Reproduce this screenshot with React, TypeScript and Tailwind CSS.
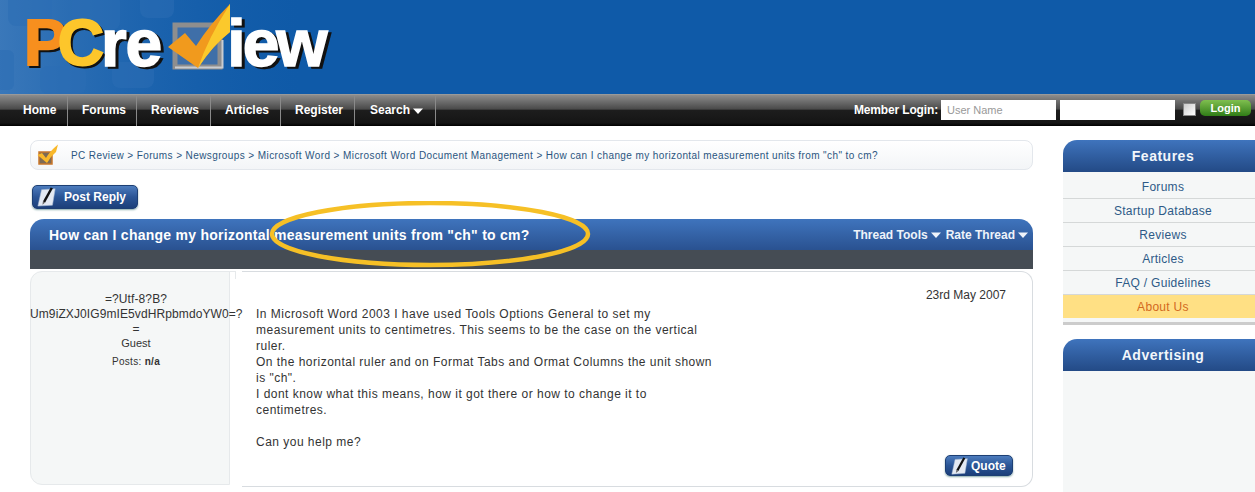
import { ReactNode } from "react";

const navItems = [
  { label: "Home", width: "w-[59px]" },
  { label: "Forums", width: "w-[69px]" },
  { label: "Reviews", width: "w-[74px]" },
  { label: "Articles", width: "w-[70px]" },
  { label: "Register", width: "w-[74px]" },
];
const sideLinks = ["Forums", "Startup Database", "Reviews", "Articles", "FAQ / Guidelines"];
const crumbs = [
  "PC Review",
  "Forums",
  "Newsgroups",
  "Microsoft Word",
  "Microsoft Word Document Management",
  'How can I change my horizontal measurement units from "ch" to cm?',
];

function Caret({ className = "" }: { className?: string }) {
  return (
    <svg width="10" height="6" viewBox="0 0 10 6" className={className}>
      <path d="M0 0.5 H10 L5 6 Z" fill="currentColor" />
    </svg>
  );
}

function NoteIcon({ size = 20 }: { size?: number }) {
  return (
    <svg width={size} height={size} viewBox="0 0 22 22" className="shrink-0">
      <path d="M5 3 L20 2 L17 20 L1 21 Z" fill="#e4eaf3" stroke="#a9bbd4" strokeWidth="0.6" />
      <path d="M15 0.5 L17.5 1.5 L9 17 L6.5 16 Z" fill="#111" />
      <path d="M6.5 16 L9 17 L6 19.5 Z" fill="#666" />
    </svg>
  );
}

function BlueButton({ children, className }: { children: ReactNode; className: string }) {
  return (
    <div
      className={`flex items-center rounded-[5px] border border-[#1d3f74] bg-gradient-to-b from-[#4d7cbd] via-[#2a5596] to-[#1c3f7a] font-bold text-white shadow-[0_1px_2px_#8aa] ${className}`}
    >
      {children}
    </div>
  );
}

function SideHeader({ title }: { title: string }) {
  return (
    <div className="flex h-8 items-center justify-center rounded-tl-[14px] bg-gradient-to-b from-[#3f74bd] to-[#234a86] text-[14px] font-bold tracking-[0.5px] text-[#f2f6fb]">
      {title}
    </div>
  );
}

function Logo() {
  return (
    <div className="relative flex h-[94px] w-[360px] items-start pl-[24px] pt-[6px] font-['Liberation_Sans',sans-serif] text-[66px] font-bold leading-[74px]">
      <span className="text-[64px] tracking-[-9px] [filter:drop-shadow(2px_2px_0_#111)]">
        <span className="text-[#f78f1e] [-webkit-text-stroke:2px_#f78f1e]">P</span>
        <span className="text-[#fdc62b] [-webkit-text-stroke:2px_#fdc62b]">C</span>
      </span>
      <span className="ml-[6px] tracking-[-1px] text-white [-webkit-text-stroke:1.5px_white] [filter:drop-shadow(3px_2px_0_#111)]">
        re
      </span>
      <span className="ml-[66px] tracking-[-3px] text-white [-webkit-text-stroke:1.5px_white] [filter:drop-shadow(3px_2px_0_#111)]">
        iew
      </span>
      <svg width="70" height="72" viewBox="0 0 70 72" className="absolute left-[166px] top-0">
        <rect x="9" y="25" width="45" height="42" fill="#3f6fa8" stroke="#8e8e8e" strokeWidth="5" />
        <path d="M9 67.5 H56.5 V40" fill="none" stroke="#c9ccd0" strokeWidth="2" />
        <path d="M2 47 L19 33 L30 46 Q44 24 64 4 L64 32 Q47 45 32 68 Z" fill="#f19a1d" />
        <path d="M32 68 Q42 38 64 4 L64 32 Q47 45 32 68 Z" fill="#fbc92c" />
      </svg>
    </div>
  );
}

export default function App() {
  return (
    <div className="h-[492px] w-[1255px] overflow-hidden bg-white font-['Liberation_Sans',Arial,sans-serif] text-[12px] text-[#333]">
      <header className="relative h-[94px] overflow-hidden bg-[#0f5aa8]">
        <svg width="300" height="94" viewBox="0 0 300 94" className="absolute left-0 top-0">
          <defs>
            <linearGradient id="kb" x1="0" x2="1">
              <stop offset="0" stopColor="#5d90c8" stopOpacity="0.55" />
              <stop offset="1" stopColor="#1f66b0" stopOpacity="0" />
            </linearGradient>
          </defs>
          <rect width="300" height="94" fill="url(#kb)" />
          <g fill="#2b6db5" fillOpacity="0.55">
            <rect x="8" y="-8" width="44" height="34" rx="8" />
            <rect x="72" y="-6" width="48" height="36" rx="8" />
            <rect x="140" y="-10" width="34" height="28" rx="8" />
            <rect x="-10" y="50" width="24" height="40" rx="6" />
            <rect x="40" y="66" width="46" height="28" rx="8" />
            <rect x="112" y="62" width="42" height="26" rx="8" />
          </g>
        </svg>
        <Logo />
      </header>

      <nav className="flex h-8 items-stretch justify-between border-t border-[#999] bg-[linear-gradient(#8c8c8c,#4a4a4a_45%,#1d1d1d_50%,#151515_90%,#000)] text-white">
        <ul className="flex pl-[9px] font-bold">
          {navItems.map((item) => (
            <li key={item.label} className={`flex items-center border-r border-[#8a8a8a] pb-[2px] pl-[14px] ${item.width}`}>
              {item.label}
            </li>
          ))}
          <li className="flex w-[81px] items-center gap-[3px] border-r border-[#8a8a8a] pb-[2px] pl-[15px]">
            Search <Caret className="mt-[2px]" />
          </li>
        </ul>
        <div className="flex items-center pb-[2px] pr-[4px]">
          <span className="mr-[3px] font-bold tracking-[-0.15px]">Member Login:</span>
          <input
            placeholder="User Name"
            className="h-5 w-[115px] bg-white px-[6px] text-[11px] text-[#333] placeholder:text-[#999]"
          />
          <input className="ml-[4px] h-5 w-[115px] bg-white" />
          <span className="ml-[8px] h-[13px] w-[13px] border border-[#888] bg-gradient-to-br from-[#ccc] to-white" />
          <span className="mb-[3px] ml-[4px] flex h-[16px] w-[51px] items-center justify-center rounded-[5px] bg-gradient-to-b from-[#7fbf4f] to-[#2f7d16] text-[11px] font-bold text-white">
            Login
          </span>
        </div>
      </nav>

      <div className="flex pl-[30px] pt-[14px]">
        <main className="w-[1003px] shrink-0">
          <div className="flex h-[30px] items-center rounded-[8px] border border-[#e3e7ec] bg-gradient-to-b from-white to-[#f3f5f7] pl-[6px] text-[10px] tracking-[0.4px] text-[#2a5580]">
            <svg width="22" height="22" viewBox="0 0 22 22" className="mr-[12px] shrink-0">
              <rect x="2" y="8" width="13" height="12" fill="#7d6a55" stroke="#c9772a" strokeWidth="1.5" />
              <path d="M0.5 11 L5 9 L9 14 Q13 7 21 0.5 L19 8 Q14 12 10 19 Z" fill="#f9b82a" />
            </svg>
            {crumbs.map((c, i) => (
              <span key={c} className="whitespace-pre">
                {c}
                {i < crumbs.length - 1 ? " > " : ""}
              </span>
            ))}
          </div>

          <BlueButton className="ml-[2px] mt-[15px] h-[24px] w-[106px] gap-[7px] pl-[4px]">
            <NoteIcon />
            Post Reply
          </BlueButton>

          <div className="relative mt-[10px] h-[50px] rounded-t-[14px] bg-[linear-gradient(#3f74bd,#2a5291_61%,#454c54_63%,#454c54)] text-white">
            <div className="flex h-[31px] items-center justify-between pl-[19px] pr-[5px]">
              <h1 className="pt-[1px] text-[14px] font-bold tracking-[0.26px]">
                How can I change my horizontal measurement units from "ch" to cm?
              </h1>
              <div className="flex items-center gap-[3px] font-bold text-[#eef3fa]">
                Thread Tools <Caret />
                <span className="ml-[2px]">Rate Thread</span> <Caret />
              </div>
            </div>
            <svg width="324" height="70" viewBox="0 0 324 70" className="absolute left-[238px] top-[-18px]" fill="none">
              <ellipse cx="162" cy="33" rx="158" ry="31" stroke="#f6c026" strokeWidth="4.5" />
            </svg>
          </div>

          <div className="mt-[2px] flex h-[216px] items-start">
            <aside className="relative z-10 flex h-[214px] w-[200px] shrink-0 flex-col items-start rounded-l-[12px] border border-[#e6e9eb] bg-[#f5f7f7] pt-[20px] text-center leading-[15px]">
              <span className="absolute left-full top-[-1px] h-[8px] w-[7px] border-r border-t border-[#e6e9eb]" />
              <div className="ml-[-1px] w-[212px] shrink-0 tracking-[0.1px]">
                =?Utf-8?B?
                <br />
                Um9iZXJ0IG9mIE5vdHRpbmdoYW0=?
                <br />=
              </div>
              <div className="ml-[-1px] mt-[-1px] w-[212px] text-[11px] leading-[14px]">Guest</div>
              <div className="ml-[-1px] mt-[4px] w-[212px] text-[10px] tracking-[0.3px]">
                Posts: <b>n/a</b>
              </div>
            </aside>
            <article className="ml-[12px] flex h-[216px] flex-1 flex-col rounded-r-[12px] border border-l-0 border-[#d8dce0] bg-white pb-[10px] pl-[14px] pr-[26px] pt-[14px]">
              <div className="text-right">23rd May 2007</div>
              <p className="mt-[2px] w-[458px] leading-4 tracking-[0.48px]">
                In Microsoft Word 2003 I have used Tools Options General to set my measurement units to centimetres. This seems to be the case on the vertical ruler.
                <br />
                On the horizontal ruler and on Format Tabs and Ormat Columns the unit shown is "ch".
                <br />
                I dont know what this means, how it got there or how to change it to centimetres.
                <br />
                <br />
                Can you help me?
              </p>
              <div className="mt-auto flex justify-end">
                <BlueButton className="mr-[-7px] h-[21px] w-[68px] gap-[2px] pl-[5px]">
                  <NoteIcon size={18} />
                  Quote
                </BlueButton>
              </div>
            </article>
          </div>
        </main>

        <aside className="ml-[30px] w-[200px] shrink-0">
          <SideHeader title="Features" />
          <ul className="border-b-[3px] border-[#ccc] bg-[#f5f7f7] pb-[4px] pt-[3px] tracking-[0.3px] text-[#2d5a87]">
            {sideLinks.map((l) => (
              <li key={l} className="flex h-6 items-center justify-center border-b border-[#d5d8d8]">
                {l}
              </li>
            ))}
            <li className="flex h-[23px] items-center justify-center bg-[#ffe084] text-[#d2691e]">About Us</li>
          </ul>
          <div className="mt-[14px]">
            <SideHeader title="Advertising" />
            <div className="h-[130px] bg-[#f5f7f7]" />
          </div>
        </aside>
      </div>
    </div>
  );
}
